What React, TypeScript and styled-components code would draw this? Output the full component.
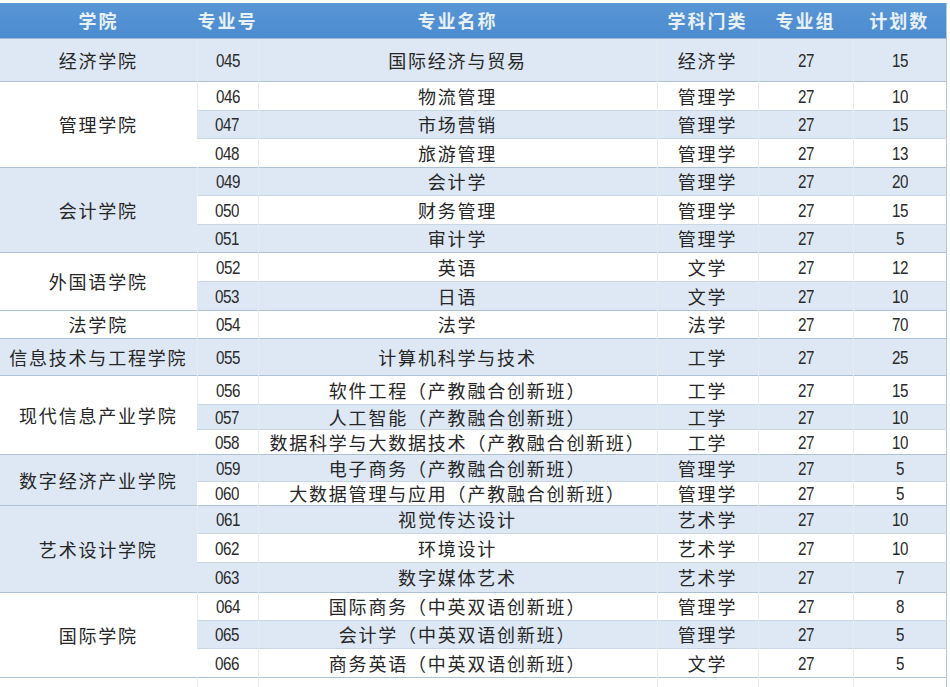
import React from 'react'
import styled, { createGlobalStyle } from 'styled-components'

const GlobalStyle = createGlobalStyle`
  html, body {
    margin: 0;
    padding: 0;
    background: #ffffff;
  }
  body {
    font-family: "Noto Sans CJK SC", "Noto Sans", sans-serif;
  }
`

interface Major {
  code: string
  name: string
  category: string
  plan: number
  h: number
}

interface College {
  name: string
  majors: Major[]
}

const colleges: College[] = [
  {
    name: '经济学院',
    majors: [{ code: '045', name: '国际经济与贸易', category: '经济学', plan: 15, h: 43 }]
  },
  {
    name: '管理学院',
    majors: [
      { code: '046', name: '物流管理', category: '管理学', plan: 10, h: 29 },
      { code: '047', name: '市场营销', category: '管理学', plan: 15, h: 28 },
      { code: '048', name: '旅游管理', category: '管理学', plan: 13, h: 29 }
    ]
  },
  {
    name: '会计学院',
    majors: [
      { code: '049', name: '会计学', category: '管理学', plan: 20, h: 28 },
      { code: '050', name: '财务管理', category: '管理学', plan: 15, h: 29 },
      { code: '051', name: '审计学', category: '管理学', plan: 5, h: 28 }
    ]
  },
  {
    name: '外国语学院',
    majors: [
      { code: '052', name: '英语', category: '文学', plan: 12, h: 29 },
      { code: '053', name: '日语', category: '文学', plan: 10, h: 29 }
    ]
  },
  {
    name: '法学院',
    majors: [{ code: '054', name: '法学', category: '法学', plan: 70, h: 28 }]
  },
  {
    name: '信息技术与工程学院',
    majors: [{ code: '055', name: '计算机科学与技术', category: '工学', plan: 25, h: 37 }]
  },
  {
    name: '现代信息产业学院',
    majors: [
      { code: '056', name: '软件工程（产教融合创新班）', category: '工学', plan: 15, h: 29 },
      { code: '057', name: '人工智能（产教融合创新班）', category: '工学', plan: 10, h: 25 },
      { code: '058', name: '数据科学与大数据技术（产教融合创新班）', category: '工学', plan: 10, h: 25 }
    ]
  },
  {
    name: '数字经济产业学院',
    majors: [
      { code: '059', name: '电子商务（产教融合创新班）', category: '管理学', plan: 5, h: 27 },
      { code: '060', name: '大数据管理与应用（产教融合创新班）', category: '管理学', plan: 5, h: 24 }
    ]
  },
  {
    name: '艺术设计学院',
    majors: [
      { code: '061', name: '视觉传达设计', category: '艺术学', plan: 10, h: 28 },
      { code: '062', name: '环境设计', category: '艺术学', plan: 10, h: 29 },
      { code: '063', name: '数字媒体艺术', category: '艺术学', plan: 7, h: 30 }
    ]
  },
  {
    name: '国际学院',
    majors: [
      { code: '064', name: '国际商务（中英双语创新班）', category: '管理学', plan: 8, h: 28 },
      { code: '065', name: '会计学（中英双语创新班）', category: '管理学', plan: 5, h: 28 },
      { code: '066', name: '商务英语（中英双语创新班）', category: '文学', plan: 5, h: 29 }
    ]
  }
]

const Page = styled.div`
  width: 950px;
  height: 687px;
  overflow: hidden;
  padding-top: 3px;
  box-sizing: border-box;
  background: #ffffff;
`

const Table = styled.table`
  width: 946px;
  table-layout: fixed;
  border-collapse: collapse;
  border-right: 1px solid #b9c6d3;
  color: #262626;
`

const HeadRow = styled.tr`
  height: 35px;
  background: linear-gradient(#5896d6, #4c8bcf);
`

const HeadCell = styled.th`
  padding: 0;
  font-size: 18px;
  font-weight: 700;
  letter-spacing: 2px;
  line-height: 1;
  white-space: nowrap;
  color: #e8f0f9;
  text-align: center;
  vertical-align: middle;
  border-bottom: 1px solid #9fb8d2;
`

const Row = styled.tr<{ $h: number; $stripe: boolean; $first: boolean }>`
  height: ${(p) => p.$h}px;
  background: ${(p) => (p.$stripe ? '#dde8f4' : '#ffffff')};
  border-top: 1px solid ${(p) => (p.$first ? '#adc0d4' : '#c9d6e3')};
`

const Cell = styled.td`
  padding: 0;
  text-align: center;
  vertical-align: middle;
  white-space: nowrap;
  border-left: 1px solid #e6ebf0;
  font-family: "Noto Sans CJK SC", "Noto Sans", sans-serif;
  font-size: 18px;
  letter-spacing: 1.8px;
  line-height: 1;
  &:first-child {
    border-left: none;
  }
`

const Num = styled.span`
  display: inline-block;
  font-family: "Liberation Sans", Arial, sans-serif;
  font-size: 19px;
  letter-spacing: -0.6px;
  color: #2a2a2a;
  transform: scaleX(0.8);
`

const Tail = styled.tr`
  height: 12px;
  background: #ffffff;
  border-top: 1px solid #adc0d4;
`

const columns = [
  { title: '学院', w: 197 },
  { title: '专业号', w: 61 },
  { title: '专业名称', w: 399 },
  { title: '学科门类', w: 101 },
  { title: '专业组', w: 95 },
  { title: '计划数', w: 93 }
]

export default function App() {
  let index = 0
  return (
    <Page>
      <GlobalStyle />
      <Table>
        <colgroup>
          {columns.map((c) => (
            <col key={c.title} style={{ width: c.w }} />
          ))}
        </colgroup>
        <thead>
          <HeadRow>
            {columns.map((c) => (
              <HeadCell key={c.title}>{c.title}</HeadCell>
            ))}
          </HeadRow>
        </thead>
        <tbody>
          {colleges.map((college) =>
            college.majors.map((m, i) => {
              const stripe = index % 2 === 0
              index += 1
              return (
                <Row key={m.code} $h={m.h} $stripe={stripe} $first={i === 0}>
                  {i === 0 && <Cell rowSpan={college.majors.length}>{college.name}</Cell>}
                  <Cell>
                    <Num>{m.code}</Num>
                  </Cell>
                  <Cell>{m.name}</Cell>
                  <Cell>{m.category}</Cell>
                  <Cell>
                    <Num>27</Num>
                  </Cell>
                  <Cell>
                    <Num>{m.plan}</Num>
                  </Cell>
                </Row>
              )
            })
          )}
          <Tail>
            <Cell />
            <Cell />
            <Cell />
            <Cell />
            <Cell />
            <Cell />
          </Tail>
        </tbody>
      </Table>
    </Page>
  )
}
